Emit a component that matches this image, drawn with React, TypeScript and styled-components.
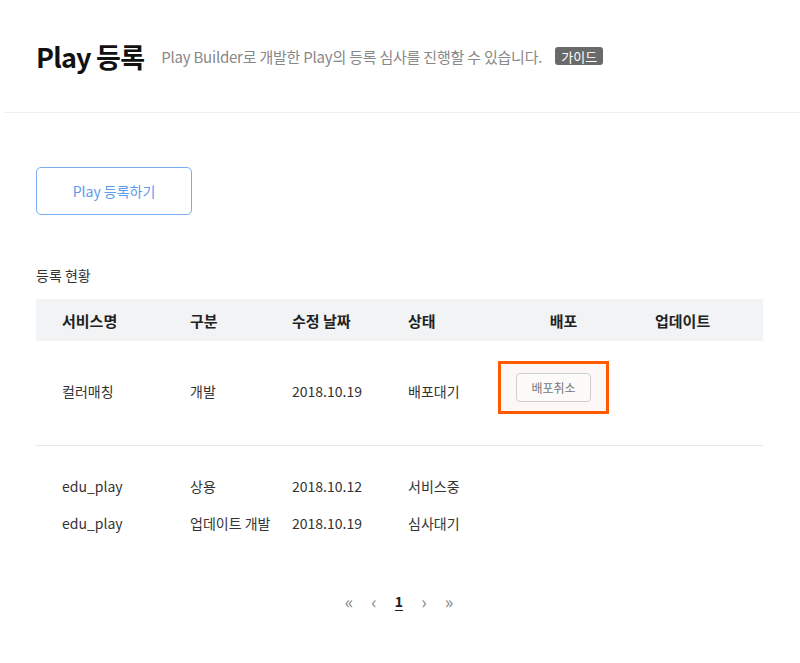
import React from 'react'
import styled, { createGlobalStyle } from 'styled-components'

const GlobalStyle = createGlobalStyle`
  body {
    margin: 0;
    background: #fff;
    font-family: 'Noto Sans CJK KR', 'Noto Sans', sans-serif;
    color: #333;
  }
`

type Row = {
  name: string
  kind: string
  date: string
  status: string
  cancel?: boolean
}

const current: Row[] = [
  { name: '컬러매칭', kind: '개발', date: '2018.10.19', status: '배포대기', cancel: true },
]

const history: Row[] = [
  { name: 'edu_play', kind: '상용', date: '2018.10.12', status: '서비스중' },
  { name: 'edu_play', kind: '업데이트 개발', date: '2018.10.19', status: '심사대기' },
]

const columns = ['서비스명', '구분', '수정 날짜', '상태', '배포', '업데이트']
const widths = [128, 102, 116, 116, 131, 134]

const App: React.FC = () => {
  return (
    <Page>
      <GlobalStyle />
      <Header>
        <Title>Play 등록</Title>
        <Description>Play Builder로 개발한 Play의 등록 심사를 진행할 수 있습니다.</Description>
        <GuideBadge>가이드</GuideBadge>
      </Header>
      <Content>
        <RegisterButton>Play 등록하기</RegisterButton>
        <SectionTitle>등록 현황</SectionTitle>
        <Table>
          <colgroup>
            {widths.map((w, i) => (
              <col key={i} style={{ width: w }} />
            ))}
          </colgroup>
          <thead>
            <tr>
              {columns.map((c, i) => (
                <HeadCell key={c} center={i === 4}>
                  {c}
                </HeadCell>
              ))}
            </tr>
          </thead>
          <CurrentBody>
            {current.map((r) => (
              <tr key={r.name}>
                <Cell>{r.name}</Cell>
                <Cell>{r.kind}</Cell>
                <Cell>{r.date}</Cell>
                <Cell>{r.status}</Cell>
                <ActionCell>
                  {r.cancel && (
                    <Highlight>
                      <CancelButton>배포취소</CancelButton>
                    </Highlight>
                  )}
                </ActionCell>
                <Cell />
              </tr>
            ))}
          </CurrentBody>
          <tbody>
            <SpacerRow>
              <td colSpan={6} />
            </SpacerRow>
            {history.map((r, i) => (
              <ListRow key={i}>
                <Cell>{r.name}</Cell>
                <Cell>{r.kind}</Cell>
                <Cell>{r.date}</Cell>
                <Cell>{r.status}</Cell>
                <Cell />
                <Cell />
              </ListRow>
            ))}
          </tbody>
        </Table>
        <Pagination>
          <PageArrow>«</PageArrow>
          <PageArrow>‹</PageArrow>
          <PageNumber>1</PageNumber>
          <PageArrow>›</PageArrow>
          <PageArrow>»</PageArrow>
        </Pagination>
      </Content>
    </Page>
  )
}

const Page = styled.div`
  width: 800px;
  min-height: 663px;
`

const Header = styled.div`
  display: flex;
  align-items: center;
  height: 113px;
  margin-left: 5px;
  padding-left: 31px;
  border-bottom: 1px solid #ececec;
  box-sizing: border-box;
`

const Title = styled.h1`
  margin: 0 17px 0 0;
  font-size: 27px;
  font-weight: 700;
  color: #111;
  letter-spacing: -0.8px;
`

const Description = styled.span`
  font-size: 15px;
  color: #888;
  letter-spacing: -0.22px;
  margin-right: 13px;
`

const GuideBadge = styled.span`
  display: inline-flex;
  align-items: center;
  justify-content: center;
  width: 48px;
  height: 18px;
  border-radius: 3px;
  background: #6a6a6a;
  color: #fff;
  font-size: 13px;
  line-height: 1;
`

const Content = styled.div`
  padding: 54px 37px 0 36px;
`

const RegisterButton = styled.button`
  display: flex;
  align-items: center;
  justify-content: center;
  width: 156px;
  height: 48px;
  border: 1px solid #7aacf0;
  border-radius: 5px;
  background: #fff;
  color: #5b9bef;
  font-family: inherit;
  font-size: 14px;
  cursor: pointer;
`

const SectionTitle = styled.h2`
  margin: 50px 0 14px;
  font-size: 14px;
  font-weight: 400;
  color: #333;
`

const Table = styled.table`
  width: 727px;
  border-collapse: collapse;
  table-layout: fixed;
`

const HeadCell = styled.th<{ center?: boolean }>`
  height: 42px;
  padding: 0 0 0 ${(p) => (p.center ? 0 : 26)}px;
  background: #f2f3f5;
  text-align: ${(p) => (p.center ? 'center' : 'left')};
  font-size: 15px;
  font-weight: 700;
  color: #222;
`

const Cell = styled.td`
  padding: 0 0 0 26px;
  font-size: 14px;
  color: #333;
  white-space: nowrap;
  vertical-align: middle;
`

const ActionCell = styled.td`
  padding: 20px 0 31px;
  vertical-align: middle;
`

const CurrentBody = styled.tbody`
  border-bottom: 1px solid #e6e6e6;
  ${Cell} {
    padding-top: 23px;
    padding-bottom: 28px;
  }
`

const SpacerRow = styled.tr`
  height: 22px;
`

const ListRow = styled.tr`
  height: 37px;
`

const Highlight = styled.div`
  display: inline-block;
  padding: 9px 15px;
  border: 3px solid #ff5a00;
  background: #fdf8f5;
`

const CancelButton = styled.button`
  display: block;
  width: 75px;
  height: 29px;
  border: 1px solid #cfcfcf;
  border-radius: 4px;
  background: #fcfbfa;
  color: #777;
  font-family: inherit;
  font-size: 12px;
  padding: 0;
  cursor: pointer;
`

const Pagination = styled.div`
  display: flex;
  justify-content: center;
  align-items: center;
  gap: 14px;
  margin-top: 46px;
  margin-left: -1px;
`

const PageArrow = styled.span`
  width: 11px;
  text-align: center;
  font-size: 18px;
  color: #888;
`

const PageNumber = styled.span`
  width: 11px;
  text-align: center;
  font-size: 14px;
  font-weight: 700;
  color: #222;
  text-decoration: underline;
  text-underline-offset: 3px;
`

export default App
